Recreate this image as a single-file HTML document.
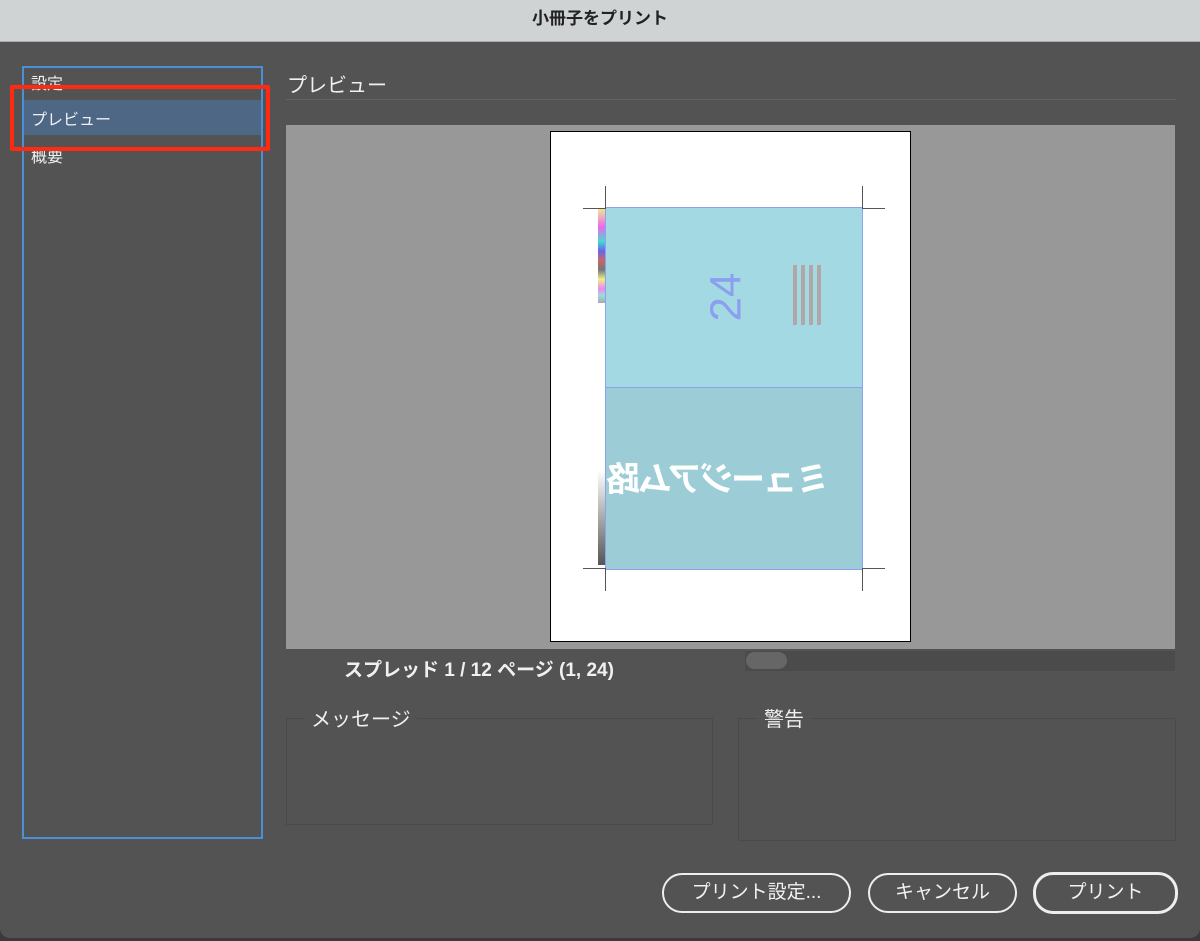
<!DOCTYPE html>
<html><head><meta charset="utf-8"><style>
body{margin:0;width:1200px;height:941px;background:#3a3a3a;overflow:hidden;font-family:"Liberation Sans","Noto Sans CJK JP",sans-serif;position:relative}
.win{position:absolute;left:0;top:0;width:1200px;height:938px;background:#535353;border-radius:0 0 10px 10px}
.tb{position:absolute;left:0;top:0;width:1200px;height:41px;background:#d0d3d4;border-bottom:1px solid #a9abac;text-align:center;line-height:38px;font-size:17px;color:#222;font-weight:bold}
.a{position:absolute}
.t{position:absolute;color:#f0f0f0;font-size:17px;white-space:nowrap}
.btn{position:absolute;height:36px;border:2px solid #eee;border-radius:20px;color:#f2f2f2;font-size:19px;text-align:center;line-height:36px}
</style></head><body>
<div class="win">
<div class="tb">小冊子をプリント</div>
<div class="a" style="left:22px;top:66px;width:237px;height:769px;border:2px solid #4a8fd8"></div>
<div class="a" style="left:24px;top:100px;width:237px;height:35px;background:#4d6785"></div>
<div class="t" style="left:31px;top:70px;font-size:16px">設定</div>
<div class="t" style="left:31px;top:106px;font-size:16px">プレビュー</div>
<div class="t" style="left:31px;top:143px;font-size:16px">概要</div>
<div class="a" style="left:10px;top:85px;width:252px;height:58px;border:4px solid #ff2a10;border-radius:2px"></div>
<div class="t" style="left:287px;top:69px;font-size:20px">プレビュー</div>
<div class="a" style="left:286px;top:99px;width:890px;height:1px;background:#636363"></div>
<div class="a" style="left:286px;top:125px;width:889px;height:524px;background:#989898"></div>
<div class="a" style="left:550px;top:131px;width:359px;height:509px;background:#fff;border:1px solid #000"></div>
<div class="a" style="left:605px;top:207px;width:256px;height:180px;background:#a2d9e2;border:1px solid #8ea0f0"></div>
<div class="a" style="left:605px;top:387px;width:256px;height:181px;background:#9ccdd6;border:1px solid #8ea0f0"></div>
<div class="a" style="left:598px;top:208px;width:7px;height:95px;background:linear-gradient(#ee8,#e6e 20%,#4dc 35%,#66e 45%,#c66 55%,#777 65%,#ee8 75%,#e8e 85%,#9dd 92%,#aaa)"></div>
<div class="a" style="left:598px;top:470px;width:7px;height:95px;background:linear-gradient(#fff,#555)"></div>
<div class="t" style="left:702px;top:272px;font-size:44px;color:#8c9ef0;transform:rotate(-90deg)">24</div>
<div class="a" style="left:793px;top:265px;width:30px;height:60px;background:repeating-linear-gradient(90deg,#b59a9a 0 4px,transparent 4px 8px);opacity:.8"></div>
<div class="t" style="left:608px;top:452px;font-size:34px;font-weight:bold;color:#fff;letter-spacing:-2px;transform:scale(-1,1)">ミュージアム路</div>
<div class="a" style="left:583px;top:186px;width:22px;height:22px;border-right:1px solid #555;border-bottom:1px solid #555"></div>
<div class="a" style="left:862px;top:186px;width:22px;height:22px;border-left:1px solid #555;border-bottom:1px solid #555"></div>
<div class="a" style="left:583px;top:568px;width:22px;height:22px;border-right:1px solid #555;border-top:1px solid #555"></div>
<div class="a" style="left:862px;top:568px;width:22px;height:22px;border-left:1px solid #555;border-top:1px solid #555"></div>
<div class="a" style="left:745px;top:651px;width:430px;height:20px;background:#4b4b4b"></div>
<div class="a" style="left:746px;top:652px;width:41px;height:17px;background:#666;border-radius:9px"></div>
<div class="t" style="left:344px;top:655px;font-size:19px;font-weight:bold">スプレッド 1 / 12 ページ (1, 24)</div>
<div class="a" style="left:286px;top:718px;width:425px;height:105px;border:1px solid #4a4a4a"></div>
<div class="a" style="left:738px;top:718px;width:436px;height:121px;border:1px solid #4a4a4a"></div>
<div class="t" style="left:305px;top:703px;font-size:20px;background:#535353;padding:0 6px">メッセージ</div>
<div class="t" style="left:758px;top:703px;font-size:20px;background:#535353;padding:0 6px">警告</div>
<div class="btn" style="left:662px;top:873px;width:185px">プリント設定...</div>
<div class="btn" style="left:868px;top:873px;width:145px">キャンセル</div>
<div class="btn" style="left:1033px;top:872px;width:139px;border-width:3px">プリント</div>
</div>
</body></html>
